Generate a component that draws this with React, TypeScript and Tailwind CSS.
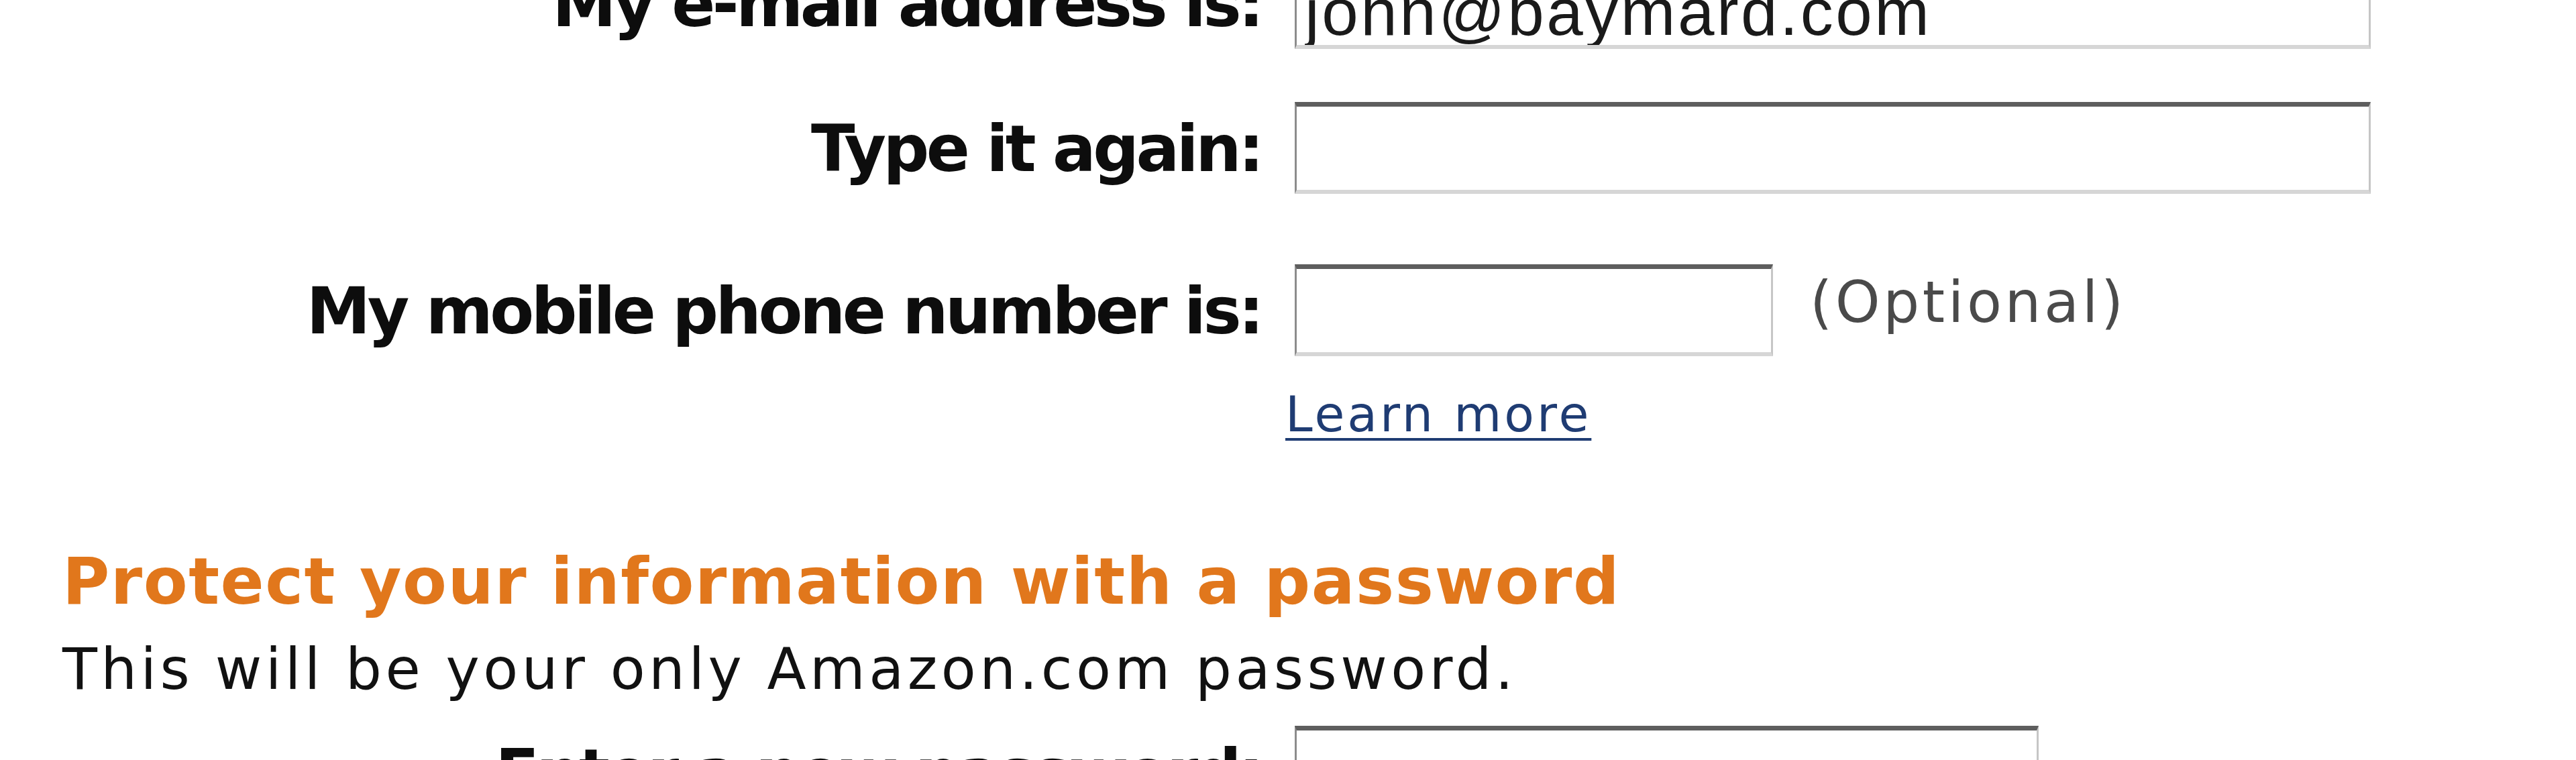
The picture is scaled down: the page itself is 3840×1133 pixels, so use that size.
import React from "react";

const inputBox =
  "h-[137px] bg-white border-solid border-t-[7px] border-l-[3px] border-r-[3px] border-b-[6px] border-t-[#5e5e5e] border-l-[#8c8c8c] border-r-[#c6c6c6] border-b-[#d6d6d6] outline-none";

const labelText =
  "w-[1880px] shrink-0 text-right font-bold text-[96px] leading-[96px] tracking-[-4.5px] pt-[22px] text-[#0d0d0d] whitespace-nowrap";

const App = () => {
  return (
    <div className="w-full h-screen overflow-hidden bg-white font-['DejaVu_Sans','Verdana',sans-serif] text-black">
      <div className="-mt-[64px]">
        <div className="flex items-start">
          <p className={labelText}>My e-mail address is:</p>
          <input
            readOnly
            value="john@baymard.com"
            className={`${inputBox} ml-[50px] w-[1604px] pl-[12px] pt-[26px] pb-0 font-['Liberation_Sans','Arial',sans-serif] text-[98px] tracking-[3.5px] text-[#1a1a1a]`}
          />
        </div>

        <div className="flex items-start mt-[79px]">
          <p className={labelText}>Type it again:</p>
          <input className={`${inputBox} ml-[50px] w-[1604px]`} />
        </div>

        <div className="flex items-start mt-[105px]">
          <p className={labelText}>My mobile phone number is:</p>
          <input className={`${inputBox} ml-[50px] w-[713px]`} />
          <span className="ml-[55px] pt-[14px] text-[85px] leading-[85px] tracking-[4.6px] text-[#4a4a4a] whitespace-nowrap">
            (Optional)
          </span>
        </div>

        <div className="mt-[50px] ml-[1916px]">
          <a
            href="#"
            className="text-[73px] leading-[73px] tracking-[4px] text-[#1f3c73] underline decoration-[4px] underline-offset-[10px] whitespace-nowrap"
          >
            Learn more
          </a>
        </div>

        <h2 className="mt-[165px] ml-[93px] font-bold text-[96px] leading-[96px] tracking-[1.5px] text-[#e1771c] whitespace-nowrap">
          Protect your information with a password
        </h2>
        <p className="mt-[40px] ml-[93px] text-[85px] leading-[85px] tracking-[5.4px] text-[#111] whitespace-nowrap">
          This will be your only Amazon.com password.
        </p>

        <div className="flex items-start mt-[42px]">
          <p className={labelText}>Enter a new password:</p>
          <input type="password" className={`${inputBox} ml-[50px] w-[1109px]`} />
        </div>
      </div>
    </div>
  );
};

export default App;
